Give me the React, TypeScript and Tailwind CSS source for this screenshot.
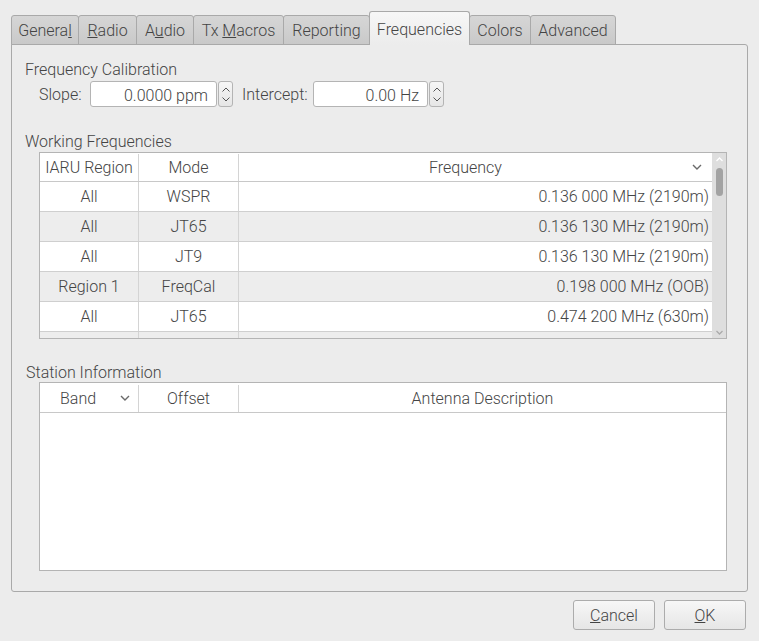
import React from "react";

const tabs = [
  { w: "w-[68px]", label: <>Genera<u>l</u></> },
  { w: "w-[59px]", label: <><u>R</u>adio</> },
  { w: "w-[58px]", label: <>A<u>u</u>dio</> },
  { w: "w-[91px]", label: <>Tx <u>M</u>acros</> },
  { w: "w-[87px]", label: <>Reportin<u>g</u></> },
  { w: "w-[101px]", label: <>Frequencies</>, active: true },
  { w: "w-[62px]", label: <>Colors</> },
  { w: "w-[86px]", label: <>Advanced</> },
];

const rows = [
  ["All", "WSPR", "0.136 000 MHz (2190m)"],
  ["All", "JT65", "0.136 130 MHz (2190m)"],
  ["All", "JT9", "0.136 130 MHz (2190m)"],
  ["Region 1", "FreqCal", "0.198 000 MHz (OOB)"],
  ["All", "JT65", "0.474 200 MHz (630m)"],
];

function Chevron({ className }: { className?: string }) {
  return (
    <svg width="10" height="6" viewBox="0 0 10 6" className={className}>
      <path d="M1 1 L5 5 L9 1" fill="none" stroke="#6a6a6a" strokeWidth="1.4" />
    </svg>
  );
}

function Spin({ value, w }: { value: string; w: string }) {
  return (
    <div className="flex h-[26px]">
      <div className={`${w} h-full bg-white border border-[#b4b4b4] rounded-[3px] flex items-center justify-end pr-[8px] pt-[3px]`}>
        {value}
      </div>
      <div className="w-[15px] h-full ml-px border border-[#b4b4b4] rounded-[3px] bg-gradient-to-b from-[#f6f6f6] to-[#e6e6e6] flex flex-col items-center justify-center gap-[5px]">
        <svg width="8" height="5" viewBox="0 0 8 5"><path d="M0.5 4.5 L4 1 L7.5 4.5" fill="none" stroke="#555" strokeWidth="1" /></svg>
        <svg width="8" height="5" viewBox="0 0 8 5"><path d="M0.5 0.5 L4 4 L7.5 0.5" fill="none" stroke="#555" strokeWidth="1" /></svg>
      </div>
    </div>
  );
}

export default function App() {
  return (
    <div
      className="w-[759px] h-[641px] bg-[#ececec] text-[#444] text-[16px] font-light leading-[18px] overflow-hidden"
      style={{ fontFamily: "Roboto, 'Liberation Sans', sans-serif" }}
    >
      {/* Tab bar */}
      <div className="flex items-end pl-[11px] pt-[11px] h-[45px] relative z-10">
        {tabs.map((t, i) =>
          t.active ? (
            <div
              key={i}
              className={`${t.w} h-[34px] -ml-px border border-b-0 border-[#a9a9a9] rounded-t-[3px] bg-gradient-to-b from-[#f7f7f7] to-[#ececec] flex items-center justify-center pt-[3px]`}
            >
              <span>{t.label}</span>
            </div>
          ) : (
            <div
              key={i}
              className={`${t.w} h-[30px] ${i === 0 ? "" : "-ml-px"} border border-[#a9a9a9] rounded-t-[3px] bg-gradient-to-b from-[#d6d6d6] to-[#c9c9c9] flex items-center justify-center pt-[2px]`}
            >
              <span>{t.label}</span>
            </div>
          )
        )}
      </div>

      {/* Panel */}
      <div className="mx-[11px] -mt-px h-[548px] border border-[#a9a9a9] rounded-b-[3px] rounded-tr-[3px] px-[13px] pt-[16px] flex flex-col">
        <div>Frequency Calibration</div>
        <div className="flex items-center mt-[2px] pl-[14px]">
          <span className="w-[51px] pt-[2px]">Slope:</span>
          <Spin value="0.0000 ppm" w="w-[127px]" />
          <span className="ml-[9px] w-[71px] pt-[2px]">Intercept:</span>
          <Spin value="0.00 Hz" w="w-[115px]" />
        </div>

        <div className="mt-[26px]">Working Frequencies</div>
        <div className="mt-[1px] ml-[14px] w-[688px] h-[187px] border border-[#b4b4b4] bg-white flex overflow-hidden">
          <div className="flex-1 flex flex-col">
            <div className="flex h-[29px] border-b border-[#c8c8c8] shrink-0 pt-[1px]">
              <div className="w-[99px] border-r border-[#d4d4d4] flex items-center justify-center">IARU Region</div>
              <div className="w-[100px] border-r border-[#d4d4d4] flex items-center justify-center">Mode</div>
              <div className="flex-1 flex items-center relative">
                <span className="w-full text-center pr-[20px]">Frequency</span>
                <Chevron className="absolute right-[10px] top-[10px]" />
              </div>
            </div>
            {[...rows, ["", "", ""]].map((r, i) => (
              <div
                key={i}
                className={`flex h-[30px] shrink-0 border-b border-[#cfcfcf] ${i % 2 === 0 ? "bg-white" : "bg-[#ededed]"}`}
              >
                <div className="w-[99px] border-r border-[#d4d4d4] flex items-center justify-center">{r[0]}</div>
                <div className="w-[100px] border-r border-[#d4d4d4] flex items-center justify-center">{r[1]}</div>
                <div className="flex-1 flex items-center justify-end pr-[3px]">{r[2]}</div>
              </div>
            ))}
          </div>
          {/* scrollbar */}
          <div className="w-[14px] bg-[#dedede] flex flex-col items-center">
            <svg width="7" height="5" viewBox="0 0 7 5" className="mt-[4px]"><path d="M0.5 4 L3.5 1 L6.5 4" fill="none" stroke="#fff" strokeWidth="1.3" /></svg>
            <div className="w-[7px] h-[28px] mt-[6px] rounded-[4px] bg-[#a3a3a3]" />
            <div className="flex-1" />
            <svg width="7" height="5" viewBox="0 0 7 5" className="mb-[3px]"><path d="M0.5 1 L3.5 4 L6.5 1" fill="none" stroke="#aaa" strokeWidth="1.3" /></svg>
          </div>
        </div>

        <div className="mt-[25px] pl-[1px]">Station Information</div>
        <div className="ml-[14px] w-[688px] h-[189px] border border-[#b4b4b4] bg-white flex flex-col">
          <div className="flex h-[30px] border-b border-[#c8c8c8] pt-[2px]">
            <div className="w-[99px] border-r border-[#d4d4d4] flex items-center relative pl-[20px]">
              Band
              <Chevron className="absolute left-[80px] top-[10px]" />
            </div>
            <div className="w-[100px] border-r border-[#d4d4d4] flex items-center justify-center">Offset</div>
            <div className="flex-1 flex items-center justify-center">Antenna Description</div>
          </div>
        </div>
      </div>

      {/* Buttons */}
      <div className="flex justify-end gap-[9px] pr-[13px] mt-[8px]">
        <button className="w-[82px] h-[30px] border border-[#acacac] rounded-[3px] bg-gradient-to-b from-[#f7f7f7] to-[#e6e6e6] text-[#444] pt-[1px]">
          <u>C</u>ancel
        </button>
        <button className="w-[82px] h-[30px] border border-[#acacac] rounded-[3px] bg-gradient-to-b from-[#f7f7f7] to-[#e6e6e6] text-[#444] pt-[1px]">
          <u>O</u>K
        </button>
      </div>
    </div>
  );
}
